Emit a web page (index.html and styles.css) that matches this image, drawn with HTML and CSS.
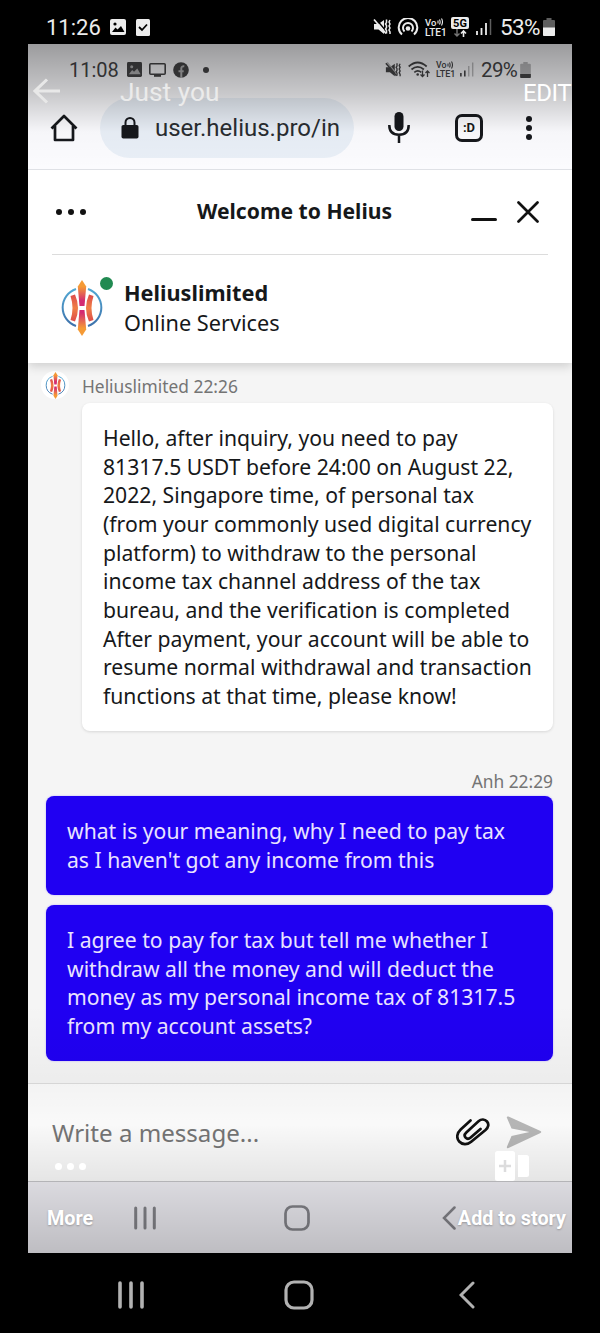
FILE: index.html
```
<!DOCTYPE html>
<html lang="en">
<head>
	<meta charset="UTF-8">
	<title>Welcome to Helius</title>
	<link rel="stylesheet" href="styles.css">
</head>
<body>
<svg class="defs">
	<symbol id="mute" viewBox="0 0 18 18">
		<path d="M1 6h4.500L11 2v14l-5.500-4.500H1z" fill="currentColor"/>
		<path d="M2.500 .5l10 12" stroke="var(--back)" stroke-width="1.500"/>
		<path d="M1 1.500l12 14" stroke="currentColor" stroke-width="1.700"/>
		<path d="M13.500 1.500v3l-1 1.500 1 1.500v2l-1 1.500 1 1.500v3M17 2l-1 2 1 2-1 2 1 2-1 2 1 2v2" fill="none" stroke="currentColor" stroke-width="1.500"/>
	</symbol>
	<symbol id="logo" viewBox="0 0 42 56">
		<g fill="none" stroke="url(#ring)" stroke-width="2">
			<path d="M15 9A19.500 19.500 0 0 0 15 46"/>
			<path d="M27 9a19.500 19.500 0 0 1 0 37"/>
		</g>
		<path d="M18.500 26L16.800 6.500 21 0l4.200 6.500L23.500 26z" fill="url(#up)"/>
		<path d="M18.500 30l-1.700 19.500L21 56l4.200-6.500L23.500 30z" fill="url(#down)"/>
		<path d="M9.500 16l4.500-1.500q6 13.500 0 27L9.500 40q4-12 0-24z" fill="url(#side)"/>
		<path d="M32.500 16L28 14.500q-6 13.500 0 27l4.500-1.500q-4-12 0-24z" fill="url(#side)"/>
	</symbol>
	<linearGradient id="ring" gradientUnits="userSpaceOnUse" x1="0" y1="8" x2="0" y2="47"><stop offset="0" stop-color="#52a9d4"/><stop offset="1" stop-color="#3d70aa"/></linearGradient>
	<linearGradient id="up" x1="0" y1="0" x2="0" y2="1"><stop offset=".25" stop-color="#f59a35"/><stop offset=".8" stop-color="#d32a72"/></linearGradient>
	<linearGradient id="down" x1="0" y1="0" x2="0" y2="1"><stop offset=".1" stop-color="#d32a72"/><stop offset=".7" stop-color="#f59a35"/></linearGradient>
	<linearGradient id="side" x1="0" y1="0" x2="0" y2="1"><stop offset="0" stop-color="#dd4b4b"/><stop offset=".5" stop-color="#f07f45"/><stop offset="1" stop-color="#dd4b4b"/></linearGradient>
</svg>

<div id="phone">
	<div class="status outer">
		<span class="clock">11:26</span>
		<svg class="pic" viewBox="0 0 16 16"><rect width="16" height="16" rx="2" fill="currentColor"/><circle cx="5" cy="5" r="1.600" fill="var(--back)"/><path d="M2 13l3.500-4.500 2 2L11 7l3.500 6z" fill="var(--back)"/></svg>
		<svg class="task" viewBox="0 0 14 17"><rect width="14" height="17" rx="1.500" fill="currentColor"/><path d="M3 8l3 3 5-5.500" fill="none" stroke="var(--back)" stroke-width="1.800"/></svg>
		<div class="right">
			<svg class="mute"><use href="#mute"/></svg>
			<svg class="spot" viewBox="0 0 22 18"><g fill="none" stroke="currentColor" stroke-width="2"><path d="M5 16.500a9.300 9.300 0 1 1 12 0"/><path d="M7.500 13.500a5 5 0 1 1 7 0"/></g><circle cx="11" cy="10.500" r="2.300" fill="currentColor"/></svg>
			<div class="volte"><span>Vo<svg viewBox="0 0 6 8"><path d="M1 2.500v3M2.500 1.500q1.300 2.500 0 5M4.500 .5q2 3.500 0 7" fill="none" stroke="currentColor" stroke-width="1.100"/></svg></span><span>LTE1</span></div>
			<svg class="net" viewBox="0 0 18 21"><rect width="18" height="12" rx="2" fill="currentColor"/><text x="2" y="10" font-size="11" font-weight="700" textLength="14">5G</text><path d="M6 12v7M3.500 16.500L6 19l2.500-2.500" fill="none" stroke="#777" stroke-width="1.400"/><path d="M12.500 20v-6M10 16.500l2.500-2.500 2.500 2.500" fill="none" stroke="currentColor" stroke-width="1.600"/></svg>
			<svg class="bars" viewBox="0 0 16 16"><path d="M1 12v4M5.500 9v7M10 4v12" stroke="currentColor" stroke-width="1.800"/><path d="M14.500 0v16" stroke="currentColor" stroke-width="1.500" opacity=".4"/></svg>
			<span class="pct">53%</span>
			<svg class="batt" viewBox="0 0 12 18"><path d="M3.500 0h5v2H11q1 0 1 1v14q0 1-1 1H1q-1 0-1-1V3q0-1 1-1h2.500z" fill="currentColor" opacity=".4"/><path d="M0 9.500h12V17q0 1-1 1H1q-1 0-1-1z" fill="currentColor"/></svg>
		</div>
	</div>

	<div id="photo">
		<div class="status inner">
			<span class="clock">11:08</span>
			<svg class="pic" viewBox="0 0 16 16"><rect width="16" height="16" rx="1.500" fill="currentColor"/><circle cx="5" cy="5" r="1.600" fill="var(--back)"/><path d="M2 13l3.500-4.500 2 2L11 7l3.500 6z" fill="var(--back)"/></svg>
			<svg class="cast" viewBox="0 0 17 14"><rect x=".8" y=".8" width="15.400" height="10.400" rx="1" fill="none" stroke="currentColor" stroke-width="1.600"/><path d="M5 12.800h7" stroke="currentColor" stroke-width="2"/></svg>
			<svg class="fb" viewBox="0 0 16 16"><circle cx="8" cy="8" r="7.800" fill="currentColor"/><path d="M8.300 16V6.500q0-2.500 3-2.200M5.500 9.200h5.200" fill="none" stroke="var(--back)" stroke-width="2"/></svg>
			<i class="more"></i>
			<div class="right">
				<svg class="mute"><use href="#mute"/></svg>
				<svg class="wifi" viewBox="0 0 22 17"><g fill="none" stroke="currentColor" stroke-width="1.700"><path d="M.7 5.500q9-8 18 0M3.500 8.500q6.200-5.400 12.400 0M6.300 11.300q3.500-2.800 7 0"/></g><circle cx="9.700" cy="13.500" r="1.300" fill="currentColor"/><path d="M14.500 9.500v6M12.500 13.500l2 2 2-2M19.500 16v-6M17.500 12l2-2 2 2" fill="none" stroke="currentColor" stroke-width="1.300"/></svg>
				<div class="volte"><span>Vo<svg viewBox="0 0 6 8"><path d="M1 2.500v3M2.500 1.500q1.300 2.500 0 5M4.500 .5q2 3.500 0 7" fill="none" stroke="currentColor" stroke-width="1.100"/></svg></span><span>LTE1</span></div>
				<svg class="bars" viewBox="0 0 16 16"><path d="M1 12v4M5.500 9v7" stroke="currentColor" stroke-width="1.800"/><path d="M10 4v12M14.500 0v16" stroke="currentColor" stroke-width="1.600" opacity=".35"/></svg>
				<span class="pct">29%</span>
				<svg class="batt" viewBox="0 0 12 18"><path d="M3.500 0h5v2H11q1 0 1 1v14q0 1-1 1H1q-1 0-1-1V3q0-1 1-1h2.500z" fill="currentColor" opacity=".35"/><path d="M0 13.500h12V17q0 1-1 1H1q-1 0-1-1z" fill="currentColor"/></svg>
			</div>
		</div>

		<div id="browser">
			<svg class="home" viewBox="0 0 28 28"><path d="M1.500 14.500L14 2l12.500 12.500M5 12v14h18V12" fill="none" stroke="#16181c" stroke-width="2.700" stroke-linejoin="round"/></svg>
			<div class="url">
				<svg class="lock" viewBox="0 0 18 22"><rect x=".5" y="8" width="17" height="13.500" rx="1.800" fill="#16181c"/><path d="M4.500 9V5.500a4.500 4.500 0 0 1 9 0V9" fill="none" stroke="#16181c" stroke-width="2"/></svg>
				<span>user.helius.pro/in</span>
			</div>
			<svg class="mic" viewBox="0 0 22 31"><rect x="6.500" y="0" width="9" height="19" rx="4.500" fill="#16181c"/><path d="M1.300 13q0 9.700 9.700 9.700t9.700-9.700M11 23v8" fill="none" stroke="#16181c" stroke-width="2.500"/></svg>
			<div class="tabs">:D</div>
			<div class="kebab"><i></i><i></i><i></i></div>
		</div>

		<div id="head">
			<div class="bar">
				<div class="dots"><i></i><i></i><i></i></div>
				<h1>Welcome to Helius</h1>
				<svg class="min" viewBox="0 0 26 22"><path d="M1.500 18.500h23" stroke="#111" stroke-width="3" stroke-linecap="round"/></svg>
				<svg class="close" viewBox="0 0 22 22"><path d="M1.500 1.500l19 19M20.500 1.500l-19 19" stroke="#111" stroke-width="2.700" stroke-linecap="round"/></svg>
			</div>
			<div class="agent">
				<div class="face"><svg><use href="#logo"/></svg><i></i></div>
				<div class="name"><b>Heliuslimited</b><p>Online Services</p></div>
			</div>
		</div>

		<div id="chat">
			<div class="from"><span class="ava"><svg><use href="#logo"/></svg></span><span class="fromname">Heliuslimited 22:26</span></div>
			<div class="msg theirs">Hello, after inquiry, you need to pay<br>81317.5 USDT before 24:00 on August 22,<br>2022, Singapore time, of personal tax<br>(from your commonly used digital currency<br>platform) to withdraw to the personal<br>income tax channel address of the tax<br>bureau, and the verification is completed<br>After payment, your account will be able to<br>resume normal withdrawal and transaction<br>functions at that time, please know!</div>
			<div class="me">Anh 22:29</div>
			<div class="msg mine">what is your meaning, why I need to pay tax<br>as I haven't got any income from this</div>
			<div class="msg mine">I agree to pay for tax but tell me whether I<br>withdraw all the money and will deduct the<br>money as my personal income tax of 81317.5<br>from my account assets?</div>
		</div>

		<div id="write">
			<span>Write a message...</span>
			<svg class="clip" viewBox="0 0 34 30"><path d="M14.500 2.500L4.700 11.500c-4 3.700-4.500 8.700-1.500 12s8 3.700 12 .2L29.500 12c3-2.600 3.700-6 1.500-8.500s-5.700-2.700-8.500-.2L10.300 14.500c-1.700 1.600-2 3.700-.7 5.100s3.400 1.400 5.100-.1L24.500 11" fill="none" stroke="#111" stroke-width="2.700" stroke-linecap="round"/></svg>
			<svg class="send" viewBox="0 0 36 33"><path d="M1 2q-.8-2 1.500-1.500L34.500 15q1.500 1 0 2L2.500 32Q.3 32.800 1 30.500L5.500 20l18-4-18-3.500z" fill="#b7b7b7"/></svg>
		</div>

		<div class="keys">
			<svg class="recent" viewBox="0 0 22 24"><path d="M1.700 2v20M11 2v20M20.300 2v20" stroke="currentColor" stroke-width="3" stroke-linecap="round"/></svg>
			<svg class="square" viewBox="0 0 26 26"><rect x="1.500" y="1.500" width="23" height="23" rx="7" fill="none" stroke="currentColor" stroke-width="2.700"/></svg>
			<svg class="prev" viewBox="0 0 14 24"><path d="M12.500 1.500L2 12l10.500 10.500" fill="none" stroke="currentColor" stroke-width="2.500" stroke-linecap="round"/></svg>
		</div>

		<!-- story viewer controls over the photo -->
		<div id="viewer">
			<svg class="arrow" viewBox="0 0 28 26"><path d="M14 1.500L2 13l12 11.500M2 13h25" fill="none" stroke="#e8e8e8" stroke-width="3.100"/></svg>
			<span class="just">Just you</span>
			<span class="edit">EDIT</span>
			<div class="dots"><i></i><i></i><i></i></div>
			<span class="moretxt">More</span>
			<svg class="add" viewBox="0 0 34 30"><rect width="20" height="30" rx="2.500" fill="#fff"/><path d="M23 4h8.500q2.500 0 2.500 2.500v17q0 2.500-2.500 2.500H23z" fill="#fff"/><path d="M4 15h12M10 9v12" stroke="#dcdcdd" stroke-width="2.500"/></svg>
			<span class="story">Add to story</span>
		</div>
	</div>

	<div class="keys bottom">
		<svg class="recent" viewBox="0 0 26 28"><path d="M2 2v24M13 2v24M24 2v24" stroke="currentColor" stroke-width="3.600" stroke-linecap="round"/></svg>
		<svg class="square" viewBox="0 0 30 30"><rect x="2" y="2" width="26" height="26" rx="8" fill="none" stroke="currentColor" stroke-width="3.200"/></svg>
		<svg class="prev" viewBox="0 0 16 28"><path d="M14 2L2 14l12 12" fill="none" stroke="currentColor" stroke-width="3" stroke-linecap="round"/></svg>
	</div>
</div>
</body>
</html>
```
FILE: styles.css
```
*{margin: 0;padding: 0;box-sizing: border-box;}
body{background: #000;font-family: "Noto Sans",sans-serif;color: #16181a;}
svg{display: block;flex: none;}
.defs{position: absolute;width: 0;height: 0;}
#phone{width: 600px;height: 1333px;overflow: hidden;}
.status{display: flex;align-items: center;font-family: Roboto,sans-serif;white-space: nowrap;}
.status .right{display: flex;align-items: center;margin-left: auto;}
.net text{fill: #000;font-family: Roboto,sans-serif;}
.volte span{display: flex;align-items: center;height: 9px;font-size: 9.500px;line-height: 9px;font-weight: 500;}
.volte span + span{margin-top: 1px;font-size: 10px;}
.volte svg{width: 6px;height: 8px;margin-left: 1px;}
.outer{--back: #000;height: 44px;padding: 10px 45px 0 46px;color: #ececec;}
.outer .clock{font-size: 22px;width: 64px;}
.outer .pic{width: 16px;height: 16px;}
.outer .task{width: 14px;height: 17px;margin-left: 10px;}
.outer .mute{width: 18px;height: 18px;}
.outer .spot{width: 22px;height: 18px;margin-left: 6px;}
.outer .volte{width: 22px;margin-left: 6px;}
.outer .net{width: 18px;height: 21px;margin-left: 4px;}
.outer .bars{width: 16px;height: 16px;margin-left: 7px;}
.outer .pct{font-size: 22.500px;width: 43px;margin-left: 8px;letter-spacing: -.7px;}
.outer .batt{width: 12px;height: 18px;}

#photo{position: relative;width: 544px;height: 1209px;margin-left: 28px;background: #fff;}
.inner{--back: #b0b0b2;height: 51px;padding: 0 41px 0 41px;color: #454547;background: #fbfbfe;}
.inner .clock{font-size: 20px;width: 58px;}
.inner .pic{width: 15px;height: 15px;}
.inner .cast{width: 17px;height: 14px;margin-left: 7px;}
.inner .fb{width: 16px;height: 16px;margin-left: 7px;}
.inner .more{width: 6px;height: 6px;margin-left: 14px;border-radius: 50%;background: #454547;}
.inner .mute{width: 16px;height: 16px;}
.inner .wifi{width: 22px;height: 17px;margin-left: 7px;}
.inner .volte{width: 20px;margin-left: 6px;}
.inner .volte span{font-size: 8.800px;height: 8px;}
.inner .volte span + span{font-size: 9px;}
.inner .bars{width: 14px;height: 15px;margin-left: 4px;}
.inner .pct{font-size: 20.500px;width: 39px;margin-left: 7px;letter-spacing: -.6px;}
.inner .batt{width: 11px;height: 16px;}

#browser{display: flex;align-items: center;height: 75px;padding: 1px 0 10px 22px;border-bottom: 1px solid #dfe1e6;background: #fbfbfe;}
.home{width: 28px;height: 28px;}
.url{display: flex;align-items: center;width: 254px;height: 60px;margin-left: 22px;padding-left: 21px;border-radius: 30px;background: #e9eff7;font-family: Roboto,sans-serif;font-size: 24px;color: #2a2d31;white-space: nowrap;}
.lock{width: 18px;height: 22px;margin-right: 16px;}
.mic{width: 22px;height: 31px;margin-left: 34px;}
.tabs{width: 28px;height: 28px;margin-left: 45px;border: 3px solid #16181c;border-radius: 7px;font: bold 13px/22px Roboto,sans-serif;text-align: center;}
.kebab{display: flex;flex-direction: column;gap: 3px;margin-left: 43px;}
.kebab i{width: 6px;height: 6px;border-radius: 50%;background: #16181c;}

#head{position: relative;height: 193px;background: #fff;box-shadow: 0 3px 10px rgba(0,0,0,.17);clip-path: inset(0 0 -20px 0);}
.bar{display: flex;align-items: center;height: 85px;margin: 0 24px;border-bottom: 1.500px solid #dcdcdc;}
.dots{display: flex;gap: 6px;}
.dots i{width: 6px;height: 6px;border-radius: 50%;background: #111;}
.bar .dots{margin-left: 4px;}
.bar h1{width: 196px;margin: -3px 0 0 111px;font-size: 21.100px;line-height: 28px;white-space: nowrap;}
.min{width: 26px;height: 22px;margin-left: 78px;}
.close{width: 22px;height: 22px;margin-left: 20px;}
.agent{display: flex;align-items: center;height: 106px;padding-left: 33px;}
.face{position: relative;}
.face svg{width: 42px;height: 56px;}
.face i{position: absolute;left: 39px;top: -3px;width: 13px;height: 13px;border-radius: 50%;background: #218a51;}
.name{margin-left: 21px;font-size: 21.700px;line-height: 30px;white-space: nowrap;}

#chat{height: 720px;padding: 1px 19px 0 18px;background: #f5f5f5;}
.from{display: flex;align-items: center;height: 44px;margin-left: -5px;color: #747474;}
.ava{display: flex;align-items: center;justify-content: center;width: 28px;height: 28px;margin-bottom: 2px;border-radius: 50%;background: #fff;}
.ava svg{width: 21px;height: 27px;}
.fromname{margin-left: 13px;margin-bottom: 1px;font-size: 17.350px;}
.msg{font-size: 21.170px;line-height: 28.650px;border-radius: 8px;padding: 21px;white-space: nowrap;}
.theirs{height: 328px;margin: -5px 0 0 36px;background: #fff;box-shadow: 0 1px 3px rgba(0,0,0,.12);}
.me{height: 65px;padding-top: 38px;font-size: 17.350px;line-height: 24px;text-align: right;color: #747474;}
.mine{height: 99px;background: #2000f2;color: #e9e3ff;box-shadow: 0 0 2px #b6a9ff;}
.mine + .mine{height: 156px;margin-top: 10px;}

#write{display: flex;align-items: center;height: 98px;padding: 0 30px 0 24px;background: #fcfcfc;border-top: 1px solid #dedede;font-size: 24.100px;color: #757575;}
#write .clip{width: 34px;height: 30px;margin-left: auto;}
#write .send{width: 36px;height: 33px;margin-left: 16px;}
.keys{display: flex;align-items: center;height: 72px;padding-left: 106px;border-top: 1px solid #c6c6ca;color: #85858b;}
.keys .recent{width: 22px;height: 24px;}
.keys .square{width: 26px;height: 26px;margin-left: 128px;}
.keys .prev{width: 14px;height: 24px;margin-left: 132px;}
#photo .keys{background: #f1f0f6;}
.bottom{height: 80px;padding: 4px 0 0 118px;border: none;color: #b2b2b2;}
.bottom .recent{width: 26px;height: 28px;}
.bottom .square{width: 30px;height: 30px;margin-left: 140px;}
.bottom .prev{width: 16px;height: 28px;margin-left: 145px;}

#viewer{position: absolute;left: 0;top: 0;width: 544px;height: 1209px;font-family: Roboto,sans-serif;white-space: nowrap;color: #fff;background: linear-gradient(rgba(0,0,0,.38),rgba(0,0,0,.2) 50px,rgba(0,0,0,.02) 88px,transparent 125px,transparent 960px,rgba(0,0,0,.035) 1040px,rgba(0,0,0,.012) 1080px,rgba(0,0,0,.09) 1136px,rgba(0,0,0,.21));}
#viewer > *{position: absolute;}
.arrow{left: 5px;top: 34px;width: 28px;height: 26px;}
.just{left: 92px;top: 33px;font-size: 26.300px;line-height: 30px;color: #ebebeb;}
.edit{right: 1px;top: 35px;font-size: 24px;line-height: 29px;letter-spacing: -.5px;}
#viewer .dots{left: 27px;top: 1119px;gap: 5px;}
#viewer .dots i{width: 7px;height: 7px;background: #fff;}
.moretxt,.story{font-size: 19.800px;font-weight: 700;line-height: 24px;top: 1163px;text-shadow: 0 1px 2px rgba(0,0,0,.25);}
.moretxt{left: 19px;}
.story{right: 6px;}
.add{left: 467px;top: 1107px;width: 34px;height: 30px;}
```
